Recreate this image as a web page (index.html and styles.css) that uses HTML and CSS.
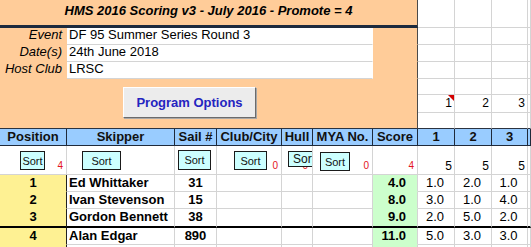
FILE: index.html
```html
<!DOCTYPE html>
<html lang="en">
<head>
    <meta charset="UTF-8">
    <meta name="viewport" content="width=device-width, initial-scale=1.0">
    <title>HMS 2016 Scoring</title>
    <link rel="stylesheet" href="styles.css">
</head>
<body>

<div class="sheet">
    <!-- title -->
    <div class="cell title">HMS 2016 Scoring v3 - July 2016 - Promote = 4</div>
    <div class="cell"></div><div class="cell"></div><div class="cell"></div><div class="cell"></div>

    <!-- event details -->
    <div class="cell label">Event</div>
    <div class="cell value">DF 95 Summer Series Round 3</div>
    <div class="cell edge"></div>
    <div class="cell"></div><div class="cell"></div><div class="cell"></div><div class="cell"></div>

    <div class="cell label">Date(s)</div>
    <div class="cell value">24th June 2018</div>
    <div class="cell edge"></div>
    <div class="cell"></div><div class="cell"></div><div class="cell"></div><div class="cell"></div>

    <div class="cell label">Host Club</div>
    <div class="cell value">LRSC</div>
    <div class="cell edge"></div>
    <div class="cell"></div><div class="cell"></div><div class="cell"></div><div class="cell"></div>

    <!-- options button + race numbers -->
    <div class="cell options-area">
        <button class="options">Program Options</button>
    </div>
    <div class="cell"></div><div class="cell"></div><div class="cell"></div><div class="cell"></div>
    <div class="cell race-no note">1</div>
    <div class="cell race-no">2</div>
    <div class="cell race-no">3</div>
    <div class="cell"></div>
    <div class="cell above"></div><div class="cell above"></div><div class="cell above"></div><div class="cell above"></div>

    <!-- header -->
    <div class="cell head">Position</div>
    <div class="cell head">Skipper</div>
    <div class="cell head">Sail #</div>
    <div class="cell head">Club/City</div>
    <div class="cell head">Hull</div>
    <div class="cell head">MYA No.</div>
    <div class="cell head">Score</div>
    <div class="cell head">1</div>
    <div class="cell head">2</div>
    <div class="cell head">3</div>
    <div class="cell head"></div>

    <!-- sort buttons -->
    <div class="cell sorts"><button class="sort sort-pos">Sort</button><span class="flag">4</span></div>
    <div class="cell sorts"><button class="sort sort-skipper">Sort</button></div>
    <div class="cell sorts"><button class="sort sort-sail">Sort</button></div>
    <div class="cell sorts"><button class="sort sort-club">Sort</button><span class="flag">0</span></div>
    <div class="cell sorts"><span class="flag flag-hull">0</span><button class="sort sort-hull">Sort</button></div>
    <div class="cell sorts"><button class="sort sort-mya">Sort</button><span class="flag">0</span></div>
    <div class="cell sorts"><span class="flag">4</span></div>
    <div class="cell sorts"><span class="count">5</span></div>
    <div class="cell sorts"><span class="count">5</span></div>
    <div class="cell sorts"><span class="count">5</span></div>
    <div class="cell"></div>

    <!-- results -->
    <div class="cell pos">1</div>
    <div class="cell name">Ed Whittaker</div>
    <div class="cell sail">31</div>
    <div class="cell"></div><div class="cell"></div><div class="cell"></div>
    <div class="cell score">4.0</div>
    <div class="cell race">1.0</div>
    <div class="cell race">2.0</div>
    <div class="cell race">1.0</div>
    <div class="cell"></div>

    <div class="cell pos">2</div>
    <div class="cell name">Ivan Stevenson</div>
    <div class="cell sail">15</div>
    <div class="cell"></div><div class="cell"></div><div class="cell"></div>
    <div class="cell score">8.0</div>
    <div class="cell race">3.0</div>
    <div class="cell race">1.0</div>
    <div class="cell race">4.0</div>
    <div class="cell"></div>

    <div class="cell pos promote">3</div>
    <div class="cell name promote">Gordon Bennett</div>
    <div class="cell sail promote">38</div>
    <div class="cell promote"></div><div class="cell promote"></div><div class="cell promote"></div>
    <div class="cell score promote">9.0</div>
    <div class="cell race promote">2.0</div>
    <div class="cell race promote">5.0</div>
    <div class="cell race promote">2.0</div>
    <div class="cell promote"></div>

    <div class="cell pos">4</div>
    <div class="cell name">Alan Edgar</div>
    <div class="cell sail">890</div>
    <div class="cell"></div><div class="cell"></div><div class="cell"></div>
    <div class="cell score">11.0</div>
    <div class="cell race">5.0</div>
    <div class="cell race">3.0</div>
    <div class="cell race">3.0</div>
    <div class="cell"></div>

    <div class="cell pos"></div>
    <div class="cell"></div><div class="cell"></div><div class="cell"></div><div class="cell"></div><div class="cell"></div>
    <div class="cell score"></div>
    <div class="cell"></div><div class="cell"></div><div class="cell"></div><div class="cell"></div>
</div>

</body>
</html>
```

FILE: styles.css
```css
body {
    margin: 0;
    background-color: #fff;
    overflow: hidden;
    font-family: "Liberation Sans", Arial, sans-serif;
}
.sheet {
    display: grid;
    grid-template-columns: 67px 108px 42px 65px 31px 60px 45px 37px 37px 36px 1fr;
    grid-template-rows: 28px 17px 17px 17px 16px 18px 16px 17px 29px 17px 17px 19px 17px 17px;
    width: 531px;
    font-size: 13px;
    color: #000;
}
.cell {
    box-sizing: border-box;
    border-right: 1px solid #d4d4d4;
    border-bottom: 1px solid #d4d4d4;
    overflow: hidden;
    white-space: nowrap;
    line-height: 16px;
}

/* top block */
.title {
    grid-column: span 7;
    background-color: #ffcc99;
    border-bottom: 3px solid #1c2a3e;
    border-right: 1px solid #4a4a4a;
    text-align: center;
    font-weight: bold;
    font-style: italic;
    line-height: 22px;
}
.label {
    background-color: #ffcc99;
    border-color: #ffcc99;
    text-align: right;
    padding-right: 4px;
    font-style: italic;
    line-height: 14px;
}
.value {
    grid-column: span 5;
    border-right-color: #fff;
    padding-left: 2px;
    line-height: 14px;
}
.edge {
    background-color: #ffcc99;
    border-bottom-color: #ffcc99;
    border-right: 1px solid #4a4a4a;
}
.options-area {
    grid-column: span 7;
    grid-row: span 3;
    background-color: #ffcc99;
    border-right: 1px solid #4a4a4a;
    border-bottom: 1px solid #2b3340;
    padding: 8px 0 0 123px;
}
.options {
    width: 133px;
    height: 31px;
    box-sizing: border-box;
    padding: 0;
    background-color: #ececec;
    border: 1px solid;
    border-color: #fff #6b6b6b #6b6b6b #fff;
    box-shadow: 1px 1px 0 #a8a8a8;
    font-family: "Liberation Sans", Arial, sans-serif;
    font-size: 13px;
    font-weight: bold;
    color: #2424c0;
}
.race-no {
    text-align: right;
    padding-right: 2px;
    font-size: 12px;
    line-height: 17px;
}
.note {
    position: relative;
}
.note::after {
    content: "";
    position: absolute;
    top: 0;
    right: 0;
    border-style: solid;
    border-width: 0 6px 6px 0;
    border-color: transparent #d40000 transparent transparent;
}
.above {
    border-bottom-color: #2b3340;
}

/* header */
.head {
    background-color: #99ccff;
    border-right: 1px solid #1f2a3a;
    border-bottom: 1px solid #1f2a3a;
    text-align: center;
    font-weight: bold;
    color: #111;
}

/* sort row */
.sorts {
    display: flex;
    align-items: flex-start;
    position: relative;
}
.sort {
    box-sizing: border-box;
    height: 19px;
    margin-top: 5px;
    padding: 0;
    background-color: #ccffff;
    border: 1px solid #1a1a1a;
    font-family: "Liberation Sans", Arial, sans-serif;
    font-size: 11px;
    color: #111;
    overflow: hidden;
}
.sort-pos { width: 25px; margin-left: 20px; }
.sort-skipper { width: 39px; margin-left: 15px; }
.sort-sail { width: 33px; margin-left: 3px; margin-top: 4px; height: 20px; }
.sort-club { width: 33px; margin-left: 17px; }
.sort-hull {
    position: absolute;
    left: 6px;
    top: 0;
    width: 26px;
    height: 16px;
    text-align: left;
    padding: 0 0 0 4px;
    line-height: 10px;
    font-size: 12px;
}
.sort-mya { width: 30px; margin-left: 7px; margin-top: 6px; }
.flag {
    margin-left: auto;
    align-self: flex-end;
    padding: 0 3px 3px 0;
    color: #e4141b;
    font-size: 10px;
    line-height: 10px;
}
.flag-hull {
    padding-right: 4px;
}
.count {
    margin-left: auto;
    align-self: flex-end;
    padding: 0 2px 2px 0;
    font-size: 12px;
    line-height: 12px;
}

/* results */
.pos {
    background-color: #fef193;
    border-bottom-color: #fef193;
    border-right: 1px solid #222;
    text-align: center;
    font-weight: bold;
}
.name {
    padding-left: 2px;
    font-weight: bold;
}
.sail {
    text-align: center;
    font-weight: bold;
}
.score {
    background-color: #ccffcc;
    border-bottom-color: #ccffcc;
    text-align: right;
    padding-right: 11px;
    font-weight: bold;
}
.race {
    text-align: center;
    padding-right: 2px;
}
.promote {
    border-bottom: 2px solid #000;
}
```
